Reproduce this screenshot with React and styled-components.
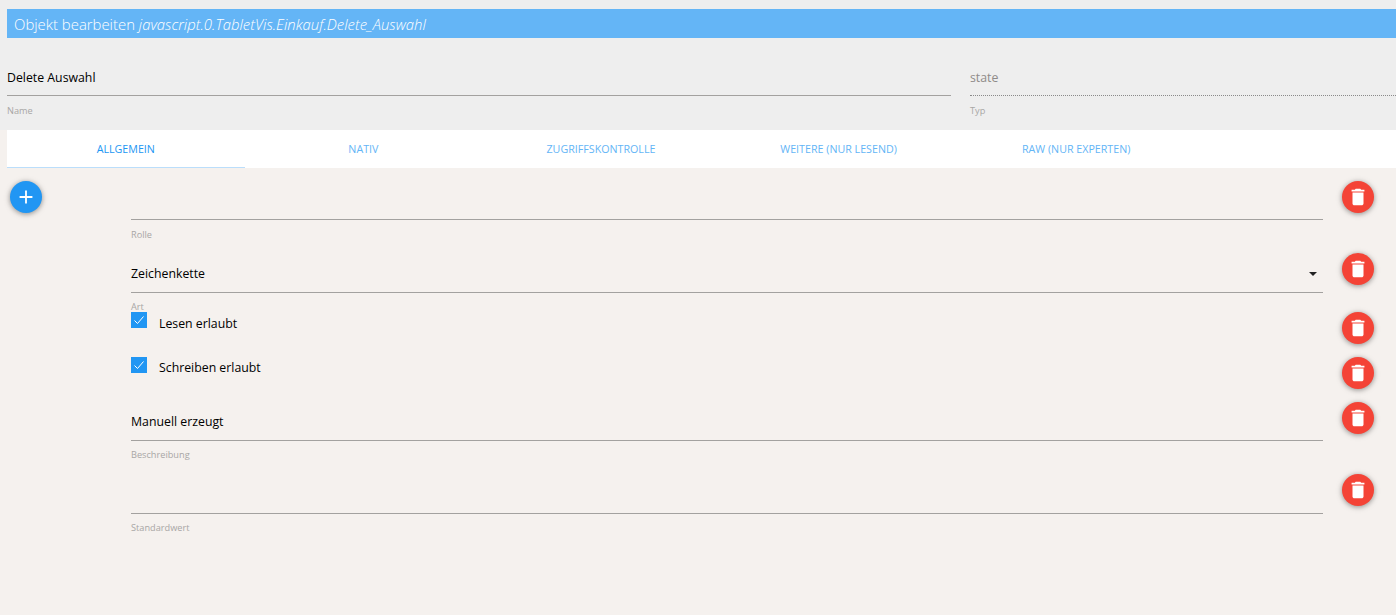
import React from "react";
import styled, { createGlobalStyle } from "styled-components";

const Global = createGlobalStyle`
  html, body { margin: 0; padding: 0; height: 100%; overflow: hidden; }
  body { font-family: "Open Sans", "Noto Sans", sans-serif; background: #f5f1ee; }
  #root { height: 100%; }
`;
const Page = styled.div`width: 1396px; height: 615px; display: flex; flex-direction: column; background: #f5f1ee;`;
const Top = styled.div`background: #eeeeee; padding: 9px 0 0 7px; height: 130px; box-sizing: border-box; flex: none;`;
const TitleBar = styled.div`
  height: 29px; background: #64b5f6; color: #fff; font-size: 14.9px; line-height: 31px;
  padding-left: 7px; font-weight: 300; white-space: nowrap;
  em { font-style: italic; }
`;
const NameRow = styled.div`display: flex; gap: 19px; margin-top: 25px;`;
const TopField = styled.div`width: ${p => p.$w}px; flex: none;`;
const TopValue = styled.div`
  height: 33px; line-height: 30px; font-size: 12.3px; box-sizing: border-box;
  color: ${p => (p.$muted ? "#8f8b89" : "#000")};
  border-bottom: 1px ${p => (p.$muted ? "dotted #8a8a8a" : "solid #a3a19f")};
`;
const SmallLabel = styled.div`font-size: 9.2px; line-height: 12px; color: #a8a6a5; margin-top: ${p => p.$mt ?? 9}px;`;
const Tabs = styled.div`display: flex; height: 38px; margin-left: 7px; background: #fff; flex: none;`;
const Tab = styled.div`
  width: 237.6px; height: 38px; box-sizing: border-box; flex: none; text-align: center;
  font-size: 10.7px; line-height: 38px; color: ${p => (p.$active ? "#2196f3" : "#64b5f6")};
  border-bottom: 1px solid ${p => (p.$active ? "#bbdefb" : "transparent")};
`;
const Content = styled.div`display: flex; flex: 1; padding-top: 13px;`;
const AddColumn = styled.div`width: 131px; flex: none; padding-left: 10px; box-sizing: border-box;`;
const RoundButton = styled.div`
  width: 32px; height: 32px; border-radius: 50%; flex: none; color: #fff;
  display: flex; align-items: center; justify-content: center;
  background: ${p => p.$color};
  box-shadow: 0 1px 6px rgba(0,0,0,.25), 0 1px 4px rgba(0,0,0,.2);
`;
const Rows = styled.div`flex: 1; padding-right: 22px; display: flex; flex-direction: column;`;
const Row = styled.div`display: flex; gap: 19px; height: ${p => p.$h}px; flex: none;`;
const Field = styled.div`flex: 1; min-width: 0;`;
const Value = styled.div`
  position: relative; box-sizing: border-box; height: ${p => p.$h}px; font-size: 12.3px; color: #000;
  border-bottom: 1px solid #a3a19f; padding-top: ${p => p.$pt ?? 11}px; line-height: 20px;
`;
const Caret = styled.span`
  position: absolute; right: 6px; top: 19px; width: 0; height: 0;
  border-left: 4px solid transparent; border-right: 4px solid transparent; border-top: 4px solid #222;
`;
const CheckField = styled.div`flex: 1; display: flex; gap: 12px; align-items: flex-start;`;
const CheckBox = styled.div`
  width: 16px; height: 16px; background: #2196f3; flex: none; display: flex; align-items: center; justify-content: center;
`;
const CheckText = styled.div`font-size: 12.3px; line-height: 20px; color: #000; margin-top: ${p => p.$mt}px;`;

const Trash = () => (
  <svg width="22" height="22" viewBox="0 0 24 24" fill="currentColor">
    <path d="M6 19c0 1.1.9 2 2 2h8c1.1 0 2-.9 2-2V7H6v12zM19 4h-3.5l-1-1h-5l-1 1H5v2h14V4z" />
  </svg>
);
const Plus = () => (
  <svg width="22" height="22" viewBox="0 0 24 24" fill="currentColor">
    <path d="M19 13h-6v6h-2v-6H5v-2h6V5h2v6h6v2z" />
  </svg>
);
const Check = () => (
  <svg width="12" height="12" viewBox="0 0 12 12" fill="none" stroke="#fff" strokeWidth="1">
    <path d="M1.5 6.5 L4.5 9.5 L10.5 2.5" />
  </svg>
);
const Del = () => <RoundButton $color="#f44336"><Trash /></RoundButton>;

const tabs = ["ALLGEMEIN", "NATIV", "ZUGRIFFSKONTROLLE", "WEITERE (NUR LESEND)", "RAW (NUR EXPERTEN)"];

export default function App() {
  return (
    <Page>
      <Global />
      <Top>
        <TitleBar>Objekt bearbeiten <em>javascript.0.TabletVis.Einkauf.Delete_Auswahl</em></TitleBar>
        <NameRow>
          <TopField $w={944}>
            <TopValue>Delete Auswahl</TopValue>
            <SmallLabel>Name</SmallLabel>
          </TopField>
          <TopField $w={426}>
            <TopValue $muted>state</TopValue>
            <SmallLabel>Typ</SmallLabel>
          </TopField>
        </NameRow>
      </Top>
      <Tabs>
        {tabs.map((t, i) => <Tab key={t} $active={i === 0}>{t}</Tab>)}
      </Tabs>
      <Content>
        <AddColumn><RoundButton $color="#2196f3"><Plus /></RoundButton></AddColumn>
        <Rows>
          <Row $h={72}>
            <Field><Value $h={39} /><SmallLabel>Rolle</SmallLabel></Field>
            <Del />
          </Row>
          <Row $h={59}>
            <Field>
              <Value $h={40}>Zeichenkette<Caret /></Value>
              <SmallLabel $mt={8}>Art</SmallLabel>
            </Field>
            <Del />
          </Row>
          <Row $h={45}>
            <CheckField><CheckBox><Check /></CheckBox><CheckText $mt={2}>Lesen erlaubt</CheckText></CheckField>
            <Del />
          </Row>
          <Row $h={45}>
            <CheckField><CheckBox><Check /></CheckBox><CheckText $mt={1}>Schreiben erlaubt</CheckText></CheckField>
            <Del />
          </Row>
          <Row $h={72}>
            <Field><Value $h={39} $pt={10}>Manuell erzeugt</Value><SmallLabel $mt={8}>Beschreibung</SmallLabel></Field>
            <Del />
          </Row>
          <Row $h={72}>
            <Field><Value $h={40} /><SmallLabel $mt={8}>Standardwert</SmallLabel></Field>
            <Del />
          </Row>
        </Rows>
      </Content>
    </Page>
  );
}
